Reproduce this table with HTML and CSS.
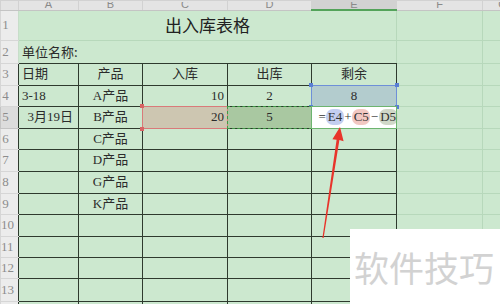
FILE: index.html
```html
<!DOCTYPE html>
<html lang="zh">
<head>
<meta charset="utf-8">
<link rel="stylesheet" href="styles.css">
</head>
<body>
<div class="sheet">
  <table class="grid">
    <colgroup>
      <col class="c-rh"><col class="c-a"><col class="c-b"><col class="c-c"><col class="c-d"><col class="c-e"><col class="c-f"><col class="c-g">
    </colgroup>
    <tr class="ch">
      <td class="corner"><div class="chl"></div></td>
      <td><div class="chl">A</div></td>
      <td><div class="chl">B</div></td>
      <td><div class="chl">C</div></td>
      <td><div class="chl">D</div></td>
      <td class="sel-col"><div class="chl">E</div></td>
      <td><div class="chl">F</div></td>
      <td><div class="chl">G</div></td>
    </tr>
    <tr class="r1">
      <td class="rh">1</td>
      <td colspan="5" class="title">出入库表格</td>
      <td></td><td></td>
    </tr>
    <tr class="r2">
      <td class="rh">2</td>
      <td colspan="5" class="unit">单位名称:</td>
      <td></td><td></td>
    </tr>
    <tr class="r3">
      <td class="rh">3</td>
      <td class="t l">日期</td>
      <td class="t c">产品</td>
      <td class="t c">入库</td>
      <td class="t c">出库</td>
      <td class="t c">剩余</td>
      <td></td><td></td>
    </tr>
    <tr class="r4">
      <td class="rh">4</td>
      <td class="t l">3-18</td>
      <td class="t c">A产品</td>
      <td class="t r">10</td>
      <td class="t c">2</td>
      <td class="t c e4"><div class="box box-blue"><i class="k tl"></i><i class="k tr"></i><i class="k bl"></i><i class="k br"></i></div>8</td>
      <td></td><td></td>
    </tr>
    <tr class="r5">
      <td class="rh rh-act">5</td>
      <td class="t r a5">3月19日</td>
      <td class="t c">B产品</td>
      <td class="t r c5"><div class="box box-red"><i class="k tl"></i><i class="k bl"></i></div>20</td>
      <td class="t c d5"><div class="box box-dash"></div>5</td>
      <td class="t e5"><div class="box box-green"></div><div class="formula"><span class="op">=</span><span class="pill p-blue">E4</span><span class="op">+</span><span class="pill p-red">C5</span><span class="op">−</span><span class="pill p-gray">D5</span><span class="caret"></span></div></td>
      <td></td><td></td>
    </tr>
    <tr class="r6"><td class="rh">6</td><td class="t"></td><td class="t c">C产品</td><td class="t"></td><td class="t"></td><td class="t"></td><td></td><td></td></tr>
    <tr class="r7"><td class="rh">7</td><td class="t"></td><td class="t c">D产品</td><td class="t"></td><td class="t"></td><td class="t"></td><td></td><td></td></tr>
    <tr class="r8"><td class="rh">8</td><td class="t"></td><td class="t c">G产品</td><td class="t"></td><td class="t"></td><td class="t"></td><td></td><td></td></tr>
    <tr class="r9"><td class="rh">9</td><td class="t"></td><td class="t c">K产品</td><td class="t"></td><td class="t"></td><td class="t"></td><td></td><td></td></tr>
    <tr class="r10"><td class="rh">10</td><td class="t"></td><td class="t"></td><td class="t"></td><td class="t"></td><td class="t"></td><td></td><td></td></tr>
    <tr class="r11"><td class="rh">11</td><td class="t"></td><td class="t"></td><td class="t"></td><td class="t"></td><td class="t"></td><td></td><td></td></tr>
    <tr class="r12"><td class="rh">12</td><td class="t"></td><td class="t"></td><td class="t"></td><td class="t"></td><td class="t"></td><td></td><td></td></tr>
    <tr class="r13"><td class="rh">13</td><td class="t"></td><td class="t"></td><td class="t"></td><td class="t"></td><td class="t"></td><td></td><td></td></tr>
    <tr class="r14"><td class="rh">14</td><td class="t"></td><td class="t"></td><td class="t"></td><td class="t"></td><td class="t"></td><td></td><td></td></tr>
  </table>

  <svg class="arrow" width="500" height="304" viewBox="0 0 500 304">
    <polygon points="322.4,238 323.6,238 339.4,140.1 343.6,141.2 340,127 332.4,139.2 336.6,139.7" fill="#e8342b"/>
  </svg>

  <div class="watermark">软件技巧</div>
</div>
</body>
</html>
```

FILE: styles.css
```css
html, body {
  margin: 0;
  padding: 0;
  width: 500px;
  height: 304px;
  overflow: hidden;
  background: #cce8cf;
}

.sheet {
  position: relative;
  width: 500px;
  height: 304px;
  overflow: hidden;
  font-family: "Liberation Serif", "Noto Sans CJK SC", serif;
  font-size: 13px;
  color: #2b2b2b;
}

.grid {
  table-layout: fixed;
  border-collapse: collapse;
  width: 522px;
}

.c-rh { width: 18px; }
.c-a { width: 60px; }
.c-b { width: 64px; }
.c-c { width: 85px; }
.c-d { width: 84px; }
.c-e { width: 85px; }
.c-f { width: 86px; }
.c-g { width: 40px; }

.grid td {
  padding: 0;
  border: 1px solid #b7d8bb;
  background: #cce8cf;
  white-space: nowrap;
  overflow: visible;
  line-height: 14px;
  vertical-align: middle;
}

/* column header */
.ch { height: 8px; }
.ch td {
  background: #e4e4e4;
  border: 1px solid #d2d2d2;
  border-bottom-color: #c4c4c4;
  height: 8px;
}
.chl {
  height: 7px;
  overflow: hidden;
  text-align: center;
  font-family: "Liberation Sans", sans-serif;
  font-size: 11px;
  line-height: 5px;
  color: #8a8a8a;
}
.ch td.sel-col {
  background: #d2d2d2;
  border-bottom: 2px solid #53a35a;
}

/* row header */
.grid td.rh {
  background: #ececec;
  border: 1px solid #d6d6d6;
  border-right: none;
  color: #8c8c8c;
  text-align: center;
  padding-right: 8px;
  font-size: 13px;
  overflow: hidden;
}
.grid td.rh-act {
  background: #dcdcdc;
  border-color: #c4c4c4;
}

.r1 { height: 30px; }
.r2 { height: 23px; }
.r3 { height: 22px; }
.r4 { height: 21px; }
.r5 { height: 22px; }
.r6 { height: 21px; }
.r7 { height: 22px; }
.r8 { height: 22px; }
.r9 { height: 21px; }
.r10 { height: 22px; }
.r11 { height: 21px; }
.r12 { height: 21px; }
.r13 { height: 23px; }
.r14 { height: 22px; }

.grid td.title {
  text-align: center;
  font-family: "Noto Sans CJK SC", sans-serif;
  font-size: 17px;
  color: #222;
  border-left-color: #c7ddc9;
  padding-bottom: 1px;
}
.grid td.unit {
  padding-left: 3px;
  font-family: "Noto Sans CJK SC", sans-serif;
  font-size: 13px;
  border-bottom: 1px solid #2e3a2e;
  border-left-color: #c7ddc9;
}

.grid td.t {
  border: 1px solid #2e3a2e;
}
.l { text-align: left; padding-left: 3px !important; }
.c { text-align: center; }
.r { text-align: right; padding-right: 3px !important; }

.grid td.a5 { padding-right: 5px !important; }

/* selection overlays */
.e4, .c5, .d5, .e5 { position: relative; }
.grid td.e4 { background: #b3ccce; }
.grid td.c5 { background: #cdc6b1; }
.grid td.d5 { background: #a9c8a1; }
.grid td.e5 { background: #ffffff; }

.box {
  position: absolute;
  left: -1px;
  top: -1px;
  right: -1px;
  bottom: -1px;
  pointer-events: none;
}
.box-blue { border: 1.5px solid #6e8fd8; }
.box-red { border: 1.5px solid #d97a7a; }
.box-dash { border: 1.5px dashed #3f9b45; }
.box-green { border: 1.5px solid #6db46f; }

.k {
  position: absolute;
  width: 4px;
  height: 4px;
}
.box-blue .k { background: #5a7fd4; }
.box-red .k { background: #d76464; }
.tl { left: -3px; top: -3px; }
.tr { right: -3px; top: -3px; }
.bl { left: -3px; bottom: -3px; }
.br { right: -3px; bottom: -3px; }

.formula {
  display: flex;
  align-items: center;
  padding-left: 6px;
  font-size: 13px;
  color: #333;
}
.op { padding: 0 0.5px; }
.pill {
  padding: 1px 1.5px;
  border-radius: 7px;
}
.p-blue { background: #c3cef0; }
.p-red { background: #f2c8c2; }
.p-gray { background: #d0d8c8; }
.caret {
  width: 1px;
  height: 15px;
  background: #111;
  margin-left: 2px;
}

.arrow {
  position: absolute;
  left: 0;
  top: 0;
  pointer-events: none;
}

.watermark {
  position: absolute;
  left: 350px;
  top: 229px;
  right: 0;
  bottom: 0;
  background: #ffffff;
  color: #d2d2d2;
  font-family: "Noto Sans CJK SC", sans-serif;
  font-size: 35px;
  line-height: 75px;
  padding-left: 4px;
  white-space: nowrap;
}
```
